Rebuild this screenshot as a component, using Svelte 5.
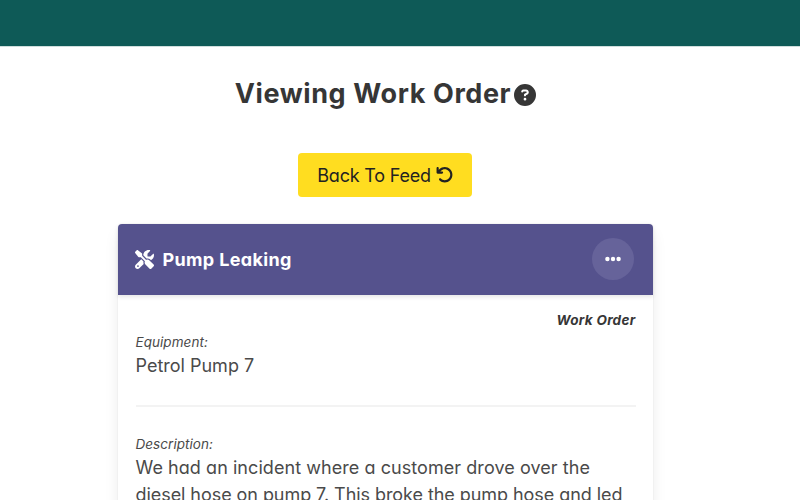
<script>
  const equipment = 'Petrol Pump 7';
  const description = [
    { text: 'We had an incident where a customer drove over the', spacing: 0.06 },
    { text: 'diesel hose on pump 7. This broke the pump hose and led', spacing: -0.06 }
  ];
</script>

<div class="page">
  <header></header>
  <main>
    <h1>
      <span>Viewing Work Order</span>
      <svg viewBox="0 0 512 512"><path d="M256 512A256 256 0 1 0 256 0a256 256 0 1 0 0 512zM169.8 165.3c7.9-22.3 29.1-37.3 52.8-37.3h58.3c34.9 0 63.1 28.3 63.1 63.1c0 22.6-12.1 43.5-31.7 54.8L280 264.4c-.2 13-10.9 23.6-24 23.6c-13.3 0-24-10.7-24-24V250.5c0-8.6 4.6-16.5 12.1-20.8l44.3-25.4c4.7-2.7 7.6-7.7 7.6-13.1c0-8.4-6.8-15.1-15.1-15.1H222.6c-3.4 0-6.4 2.1-7.5 5.3l-.4 1.2c-4.4 12.5-18.2 19-30.6 14.6s-19-18.2-14.6-30.6l.4-1.2zM224 352a32 32 0 1 1 64 0 32 32 0 1 1 -64 0z" /></svg>
    </h1>

    <button class="back">
      <span>Back To Feed</span>
      <svg viewBox="0 0 512 512"><path d="M125.7 160H176c17.7 0 32 14.3 32 32s-14.3 32-32 32H48c-17.7 0-32-14.3-32-32V64c0-17.7 14.3-32 32-32s32 14.3 32 32v51.2L97.6 97.6c87.5-87.5 229.3-87.5 316.8 0s87.5 229.3 0 316.8s-229.3 87.5-316.8 0c-12.5-12.5-12.5-32.8 0-45.3s32.8-12.5 45.3 0c62.5 62.5 163.8 62.5 226.3 0s62.5-163.8 0-226.3s-163.8-62.5-226.3 0L125.7 160z" /></svg>
    </button>

    <article>
      <div class="card-head">
        <svg class="tools" viewBox="0 0 512 512"><path d="M78.6 5C69.1-2.4 55.6-1.5 47 7L7 47c-8.5 8.5-9.4 22-2.1 31.6l80 104c4.5 5.9 11.6 9.4 19 9.4h54.1l109 109c-14.7 29-10 65.4 14.3 89.6l112 112c12.5 12.5 32.8 12.5 45.3 0l64-64c12.5-12.5 12.5-32.8 0-45.3l-112-112c-24.2-24.2-60.6-29-89.6-14.3l-109-109V104c0-7.5-3.5-14.5-9.4-19L78.6 5zM19.9 396.1C7.2 408.8 0 426.1 0 444.1C0 481.6 30.4 512 67.9 512c18 0 35.3-7.2 48-19.9L233.7 374.3c-7.8-20.9-9-43.6-3.6-65.1l-61.7-61.7L19.9 396.1zM512 144c0-10.5-1.1-20.7-3.2-30.5c-2.4-11.2-16.1-14.1-24.2-6l-63.9 63.9c-3 3-7.1 4.7-11.3 4.7H352c-8.8 0-16-7.2-16-16V102.6c0-4.2 1.7-8.3 4.7-11.3l63.9-63.9c8.1-8.1 5.2-21.8-6-24.2C388.7 1.1 378.5 0 368 0C288.5 0 224 64.5 224 144l0 .8 85.3 85.3c36-9.1 75.8 .5 104 28.7L429 274.5c49-23 83-72.8 83-130.5zM56 432a24 24 0 1 1 48 0 24 24 0 1 1 -48 0z" /></svg>
        <h2>Pump Leaking</h2>
        <button class="more" aria-label="More">
          <svg viewBox="0 0 16 6"><circle cx="2.4" cy="3" r="2.2" /><circle cx="8" cy="3" r="2.2" /><circle cx="13.6" cy="3" r="2.2" /></svg>
        </button>
      </div>
      <div class="card-body">
        <div class="kind"><span>Work Order</span></div>
        <div class="label">Equipment:</div>
        <div class="value">{equipment}</div>
        <hr />
        <div class="label">Description:</div>
        <div class="value">
          {#each description as line}
            <div style="letter-spacing: {line.spacing}px">{line.text}</div>
          {/each}
        </div>
      </div>
    </article>
  </main>
</div>

<style>
  :global(body) {
    overflow: hidden;
  }
  .page {
    height: 500px;
    overflow: hidden;
    background: #fff;
    color: #363636;
    font-family: Inter, 'Open Sans', sans-serif;
    font-feature-settings: 'cv11', 'ss03';
  }
  header {
    height: 47px;
    box-sizing: border-box;
    background: #0e5a57;
    background-clip: padding-box;
    border-bottom: 1px solid #cfdedd;
  }
  main {
    width: 535.5px;
    margin-left: 117.5px;
    display: flex;
    flex-direction: column;
    align-items: center;
  }
  svg {
    display: block;
    fill: currentColor;
    flex: none;
  }
  h1 {
    display: flex;
    align-items: center;
    gap: 4px;
    height: 40px;
    margin: 27px 0 0;
    font-size: 27px;
    font-weight: 700;
    white-space: nowrap;
  }
  h1 span {
    width: 275px;
    letter-spacing: 0.6px;
    margin-top: -1px;
  }
  h1 svg {
    width: 22px;
    height: 22px;
    margin-top: 2px;
  }
  button {
    border: 0;
    padding: 0;
    font: inherit;
    color: inherit;
    font-feature-settings: inherit;
  }
  .back {
    display: flex;
    align-items: center;
    width: 174px;
    height: 44px;
    margin: 39px 0 0 -1px;
    padding-left: 19.5px;
    border-radius: 4px;
    background: #ffdd20;
    color: #222;
    font-size: 18px;
    letter-spacing: -0.2px;
    white-space: nowrap;
    box-sizing: border-box;
  }
  .back span {
    width: 118.5px;
    text-align: left;
  }
  .back svg {
    width: 17.5px;
    height: 17.5px;
  }
  article {
    align-self: stretch;
    height: 400px;
    margin-top: 27px;
    border-radius: 4px;
    box-shadow: 0 8px 16px -2px rgba(10, 10, 10, 0.1), 0 0 0 1px rgba(10, 10, 10, 0.02);
  }
  .card-head {
    display: flex;
    align-items: center;
    height: 71px;
    padding: 0 19px 0 17.5px;
    border-radius: 4px 4px 0 0;
    background: #55528d;
    color: #fff;
    box-shadow: 0 2px 4px rgba(10, 10, 10, 0.1);
    box-sizing: border-box;
  }
  .tools {
    width: 19px;
    height: 19px;
  }
  h2 {
    flex: 1;
    margin: 0 0 0 8.5px;
    font-size: 18px;
    font-weight: 700;
    letter-spacing: 0.35px;
  }
  .more {
    display: flex;
    align-items: center;
    justify-content: center;
    width: 42px;
    height: 42px;
    margin-top: -1px;
    border-radius: 50%;
    background: #66639a;
    color: #fff;
  }
  .more svg {
    width: 16px;
    height: 6px;
  }
  .card-body {
    padding: 15px 17.5px 0 18px;
    white-space: nowrap;
  }
  .kind {
    height: 21px;
    line-height: 21px;
    text-align: right;
    font-size: 13.5px;
    font-style: italic;
    font-weight: 700;
    letter-spacing: 0.3px;
  }
  .label {
    height: 21px;
    line-height: 22px;
    font-size: 13.5px;
    font-style: italic;
    letter-spacing: 0.05px;
    color: #4a4a4a;
  }
  .value {
    font-size: 18px;
    line-height: 27px;
    color: #4a4a4a;
  }
  hr {
    height: 2px;
    margin: 26px 0;
    border: 0;
    background: #f3f3f3;
  }
</style>
